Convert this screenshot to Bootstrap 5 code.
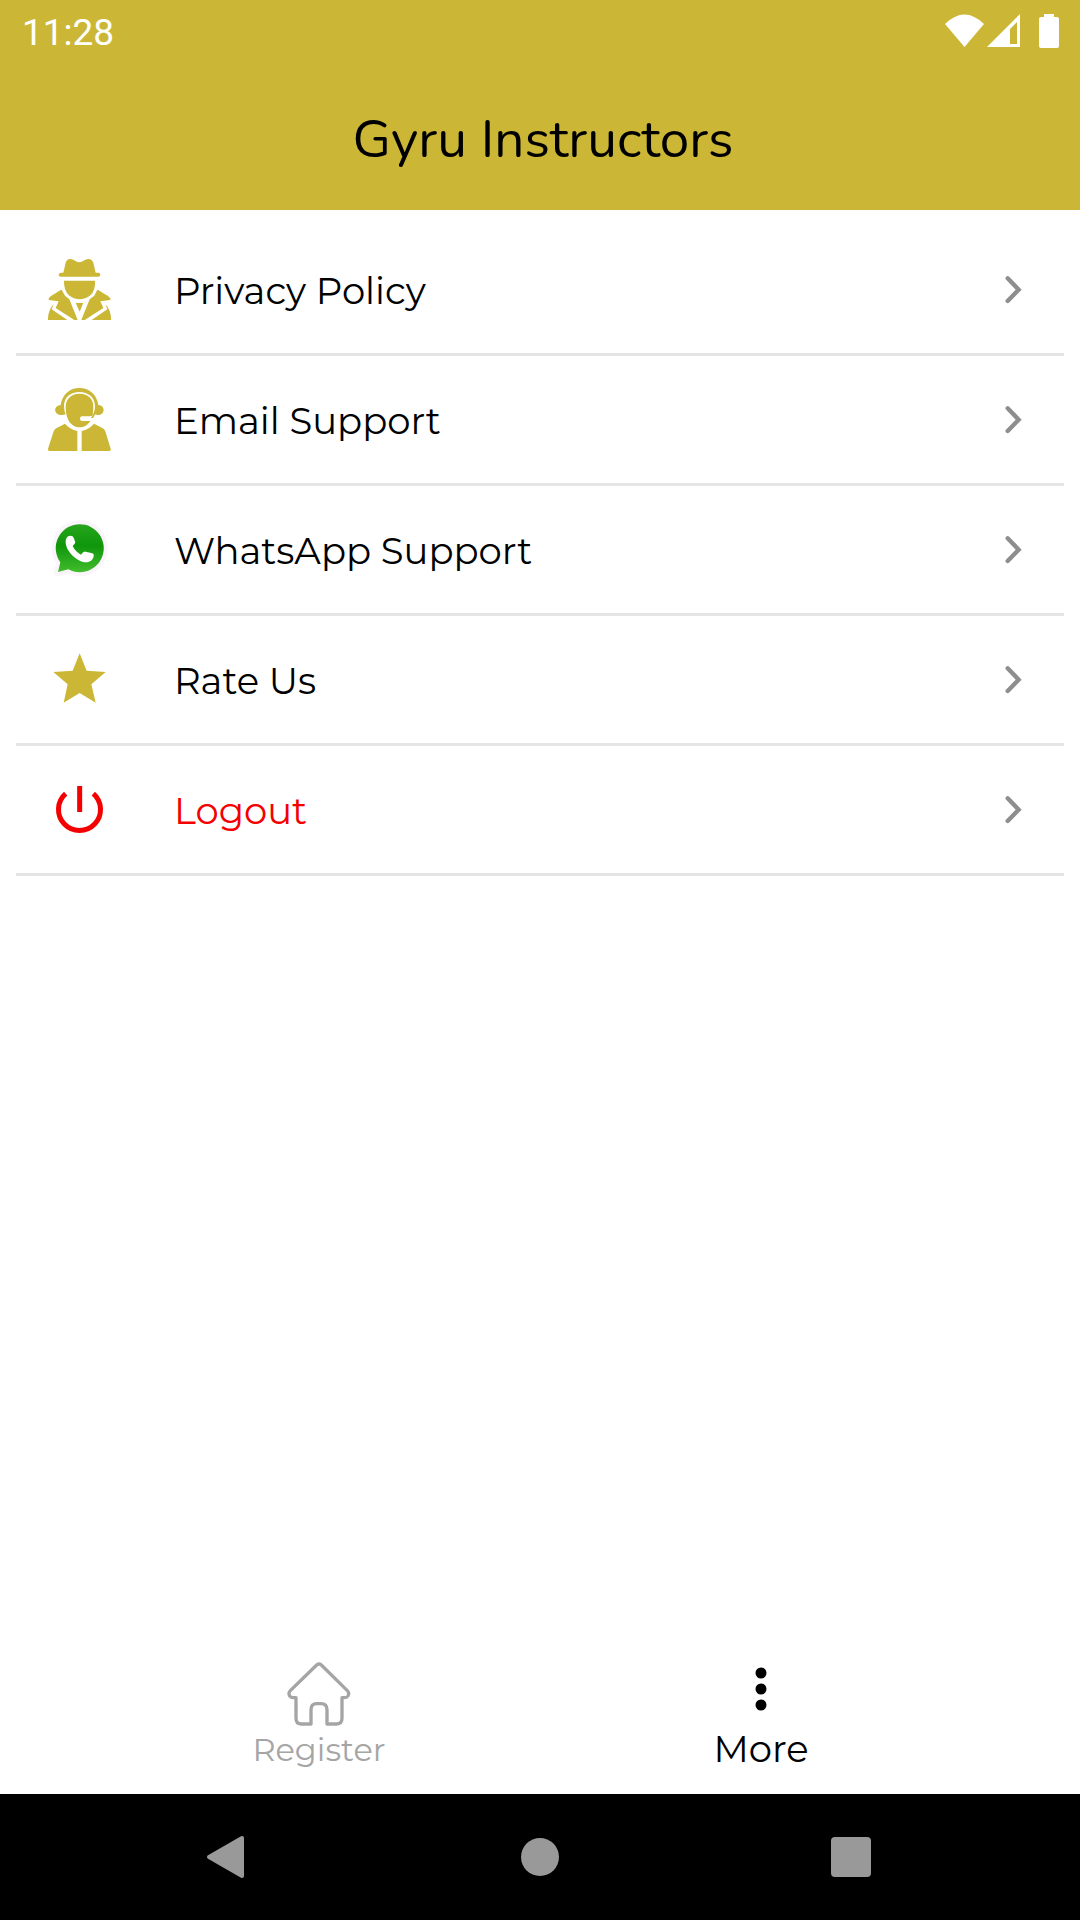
<!DOCTYPE html>
<html lang="en">
<head>
<meta charset="utf-8">
<meta name="viewport" content="width=device-width, initial-scale=1">
<title>Gyru Instructors</title>
<link href="https://cdn.jsdelivr.net/npm/bootstrap@5.3.0/dist/css/bootstrap.min.css" rel="stylesheet">
<style>
:root { --brand: #cbb735; }
body { font-family: Montserrat, Inter, sans-serif; font-size: 37px; font-weight: 400; color: #000; background: #fff; }
svg { display: block; flex: none; }
.app-header { background: var(--brand); }
.status-bar { height: 63px; padding: 10px 16px 0 22px; font-family: Roboto, sans-serif; line-height: 46px; color: #fff; }
.title-bar { height: 147px; padding: 6px 0 0 6px; }
.app-title { font-family: Nunito, Lato, sans-serif; font-size: 53px; font-weight: 400; line-height: 64px; }
.menu-list { margin: 16px 16px 0; }
.menu-link { padding: 32px 34px 31px 32px; border-bottom: 3px solid #e5e5e5; line-height: 48px; color: #000; }
.menu-text { margin-left: 62px; padding-top: 2px; }
.menu-link.is-logout { color: #f40000; }
.brand-fill { fill: var(--brand); }
.tab-bar { padding: 0 98px 25px; line-height: 40px; }
.tab-link { color: #000; }
.tab-link.is-muted { color: #a5a5a5; font-size: 32px; line-height: 38px; gap: 5px; }
.system-bar { height: 126px; padding: 0 74px; background: #000; }
.system-bar .btn { --bs-btn-border-width: 0; border-radius: 0; }
</style>
<script src="https://cdn.jsdelivr.net/npm/bootstrap@5.3.0/dist/js/bootstrap.bundle.min.js"></script>
</head>
<body>
<div class="d-flex flex-column min-vh-100">
  <header class="app-header">
    <div class="status-bar d-flex justify-content-between">
      <span>11:28</span>
      <svg width="120" height="40" viewBox="944 10 120 40" fill="#fff" aria-hidden="true">
        <path d="M945 24Q964.500 5 984 24L964.500 47Z"/>
        <path fill-rule="evenodd" d="M987 47L1020 14V47ZM1010 29V44H1017V22Z"/>
        <path d="M1044 17V14H1054V17H1057Q1059 17 1059 19V46Q1059 48 1057 48H1041Q1039 48 1039 46V19Q1039 17 1041 17Z"/>
      </svg>
    </div>
    <div class="title-bar d-flex align-items-center justify-content-center">
      <h1 class="app-title mb-0">Gyru Instructors</h1>
    </div>
  </header>

  <main class="flex-grow-1">
    <nav class="menu-list d-flex flex-column" aria-label="More">
      <a href="#privacy" class="menu-link d-flex align-items-center text-decoration-none">
        <svg class="brand-fill" width="64" height="64" viewBox="54 54 192 192" aria-hidden="true">
          <path d="M100 98L107 68Q111 56 122 57Q130 58 138 64Q148 70 158 64Q166 58 174 57Q185 56 190 68L197 98H206Q211 99 211 104Q211 110 205 110H92Q86 110 86 104Q87 99 92 98Z"/>
          <path d="M102 122H195Q197 151 181 166Q166 178 149 178Q131 178 117 166Q101 151 102 122Z"/>
          <path d="M95 149L105 167L118 178L143 240H133L77 204L86 184L57 180Q54 177 57 174Q63 167 72 163L91 151ZM202 149L193 167L179 178L154 240H164L220 204L211 184L240 180Q244 177 240 174Q234 167 225 163L206 151Z"/>
          <path d="M137 188Q149 190 160 188L149 215Z"/>
          <path d="M71 192L65 208L112 240H54Q53 212 71 192ZM226 192L232 208L185 240H243Q244 212 226 192Z"/>
        </svg>
        <span class="menu-text flex-grow-1">Privacy Policy</span>
        <svg width="32" height="32" viewBox="114 102 96 96" fill="none" stroke="#8e8e8e" stroke-width="13" stroke-linecap="round" aria-hidden="true"><path d="M143 115L176 149L143 183"/></svg>
      </a>
      <a href="#email" class="menu-link d-flex align-items-center text-decoration-none">
        <svg class="brand-fill" width="64" height="64" viewBox="54 54 192 192" aria-hidden="true">
          <path d="M92 105C97 72 120 54 148 54C177 54 200 72 205 105C226 106 226 133 206 135Q200 136 195 133L189 145L183 143Q195 129 195 108C195 82 175 66 148 66C121 66 102 82 102 108Q102 123 107 133Q97 137 87 134C70 128 72 107 92 105Z"/>
          <path d="M148 71C175 71 191 87 190 112L188 137L178 139H155Q150 140 150 146Q150 152 155 153H181C173 166 162 172 148 172C125 172 107 151 107 112C107 87 123 71 148 71Z"/>
          <path d="M105 161Q119 178 142 183V243H58Q53 242 54 236L71 184Q74 177 80 174ZM192 161Q178 178 155 183V243H239Q243 242 242 236L226 184Q223 177 217 174Z"/>
        </svg>
        <span class="menu-text flex-grow-1">Email Support</span>
        <svg width="32" height="32" viewBox="114 102 96 96" fill="none" stroke="#8e8e8e" stroke-width="13" stroke-linecap="round" aria-hidden="true"><path d="M143 115L176 149L143 183"/></svg>
      </a>
      <a href="#whatsapp" class="menu-link d-flex align-items-center text-decoration-none">
        <svg width="64" height="64" viewBox="54 54 192 192" aria-hidden="true">
          <defs><linearGradient id="waGreen" x1="0" y1="0" x2="0" y2="1"><stop offset="0" stop-color="#27a51c"/><stop offset=".45" stop-color="#0f960c"/><stop offset="1" stop-color="#42bd2d"/></linearGradient></defs>
          <path d="M84 216L91 187A72 72 0 1 1 115 208Z" fill="#fff" stroke="#faf5fa" stroke-width="24" stroke-linejoin="round"/>
          <path d="M84 216L91 187A72 72 0 1 1 115 208Z" fill="url(#waGreen)"/>
          <path d="M116 108Q128 105 131 113L136 127Q136 131 128 138Q136 155 153 164Q161 153 167 155L187 160Q193 162 191 169C189 180 180 187 169 187C145 187 109 157 107 128Q106 113 116 108Z" fill="#fff"/>
        </svg>
        <span class="menu-text flex-grow-1">WhatsApp Support</span>
        <svg width="32" height="32" viewBox="114 102 96 96" fill="none" stroke="#8e8e8e" stroke-width="13" stroke-linecap="round" aria-hidden="true"><path d="M143 115L176 149L143 183"/></svg>
      </a>
      <a href="#rate" class="menu-link d-flex align-items-center text-decoration-none">
        <svg class="brand-fill" width="64" height="64" viewBox="54 54 192 192" aria-hidden="true"><path d="M149 70L170 122L227 126L184 163L197 218L149 189L101 218L113 163L70 126L128 122Z"/></svg>
        <span class="menu-text flex-grow-1">Rate Us</span>
        <svg width="32" height="32" viewBox="114 102 96 96" fill="none" stroke="#8e8e8e" stroke-width="13" stroke-linecap="round" aria-hidden="true"><path d="M143 115L176 149L143 183"/></svg>
      </a>
      <a href="#logout" class="menu-link is-logout d-flex align-items-center text-decoration-none">
        <svg width="64" height="64" viewBox="54 444 192 192" fill="none" stroke="#f40000" stroke-width="15" aria-hidden="true"><path d="M149 468V546M107 491A63 63 0 1 0 190 491"/></svg>
        <span class="menu-text flex-grow-1">Logout</span>
        <svg width="32" height="32" viewBox="114 102 96 96" fill="none" stroke="#8e8e8e" stroke-width="13" stroke-linecap="round" aria-hidden="true"><path d="M143 115L176 149L143 183"/></svg>
      </a>
    </nav>
  </main>

  <nav class="tab-bar d-flex" aria-label="Sections">
    <a href="#register" class="tab-link is-muted w-50 d-flex flex-column align-items-center justify-content-end text-decoration-none">
      <svg width="64" height="64" viewBox="170 64 192 192" fill="none" stroke="currentColor" stroke-width="10" stroke-linejoin="round" stroke-linecap="round" aria-hidden="true"><path d="M259 73Q266 67 273 73L351 150Q358 157 353 166Q350 171 343 171H335V233Q335 250 319 250H290V207Q290 189 272 189H259Q242 189 242 207V250H212Q197 250 197 233V171H189Q182 171 178 166Q173 157 180 150Z"/></svg>
      <span>Register</span>
    </a>
    <a href="#more" class="tab-link w-50 d-flex flex-column align-items-center justify-content-end text-decoration-none" aria-current="page">
      <svg class="mb-3" width="48" height="48" viewBox="0 0 48 48" fill="currentColor" aria-hidden="true"><circle cx="24" cy="8" r="5.500"/><circle cx="24" cy="24" r="5.500"/><circle cx="24" cy="40" r="5.500"/></svg>
      <span>More</span>
    </a>
  </nav>

  <footer class="system-bar d-flex align-items-stretch">
    <button type="button" class="btn p-0 flex-fill w-100 d-flex align-items-center justify-content-center" aria-label="Back">
      <svg width="48" height="48" viewBox="205 1833 48 48" fill="#999" stroke="#999" stroke-width="4" stroke-linejoin="round" aria-hidden="true"><path d="M242 1838V1876L209 1857Z"/></svg>
    </button>
    <button type="button" class="btn p-0 flex-fill w-100 d-flex align-items-center justify-content-center" aria-label="Home">
      <svg width="48" height="48" viewBox="0 0 48 48" fill="#999" aria-hidden="true"><circle cx="24" cy="24" r="19"/></svg>
    </button>
    <button type="button" class="btn p-0 flex-fill w-100 d-flex align-items-center justify-content-center" aria-label="Recent apps">
      <svg width="48" height="48" viewBox="0 0 48 48" fill="#999" aria-hidden="true"><rect x="4" y="4" width="40" height="40" rx="4"/></svg>
    </button>
  </footer>
</div>
</body>
</html>
